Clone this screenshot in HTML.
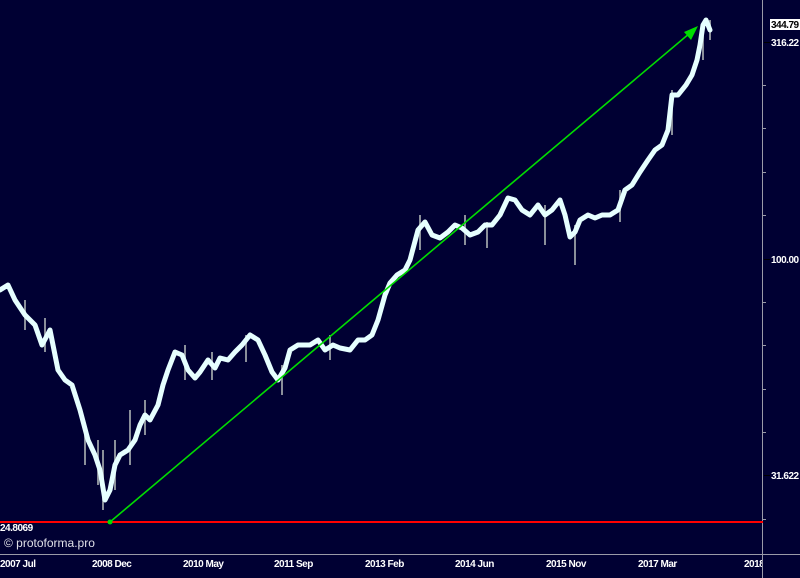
<!DOCTYPE html>
<html><head><meta charset="utf-8"><style>
html,body{margin:0;padding:0;background:#000033;}
body{width:800px;height:578px;overflow:hidden;position:relative;font-family:"Liberation Sans",sans-serif;}
svg{position:absolute;left:0;top:0;}
</style></head><body>
<svg width="800" height="578" viewBox="0 0 800 578">
<defs><clipPath id="c"><rect x="0" y="0" width="762" height="578"/></clipPath></defs>
<rect width="800" height="578" fill="#000033"/>
<line x1="762.5" y1="0" x2="762.5" y2="578" stroke="#9a9aa8" stroke-width="1"/>
<line x1="0" y1="554.5" x2="800" y2="554.5" stroke="#9a9aa8" stroke-width="1"/>
<g stroke="#9a9aa8" stroke-width="1">
<line x1="762" y1="85.5" x2="766" y2="85.5"/><line x1="762" y1="128.5" x2="766" y2="128.5"/><line x1="762" y1="172.5" x2="766" y2="172.5"/><line x1="762" y1="215.5" x2="766" y2="215.5"/>
<line x1="762" y1="302.5" x2="766" y2="302.5"/><line x1="762" y1="345.5" x2="766" y2="345.5"/><line x1="762" y1="389.5" x2="766" y2="389.5"/><line x1="762" y1="432.5" x2="766" y2="432.5"/><line x1="762" y1="519.5" x2="766" y2="519.5"/>
</g>
<g stroke="#000" stroke-width="1"><line x1="764" y1="42.5" x2="770" y2="42.5"/><line x1="764" y1="259.5" x2="770" y2="259.5"/><line x1="764" y1="475.5" x2="770" y2="475.5"/></g>
<g stroke="#8a8f9a" stroke-width="2">
<line x1="25" y1="300" x2="25" y2="330"/><line x1="45" y1="318" x2="45" y2="352"/><line x1="85" y1="430" x2="85" y2="465"/><line x1="98" y1="440" x2="98" y2="485"/><line x1="103" y1="450" x2="103" y2="510"/><line x1="115" y1="440" x2="115" y2="490"/><line x1="130" y1="410" x2="130" y2="465"/><line x1="145" y1="400" x2="145" y2="435"/><line x1="185" y1="345" x2="185" y2="380"/><line x1="212" y1="352" x2="212" y2="380"/><line x1="246" y1="335" x2="246" y2="362"/><line x1="282" y1="365" x2="282" y2="395"/><line x1="330" y1="335" x2="330" y2="360"/><line x1="420" y1="215" x2="420" y2="250"/><line x1="465" y1="215" x2="465" y2="245"/><line x1="487" y1="222" x2="487" y2="248"/><line x1="545" y1="205" x2="545" y2="245"/><line x1="575" y1="225" x2="575" y2="265"/><line x1="620" y1="190" x2="620" y2="222"/><line x1="672" y1="90" x2="672" y2="135"/><line x1="703" y1="22" x2="703" y2="60"/><line x1="710" y1="20" x2="710" y2="40"/>
</g>
<polyline fill="none" stroke="#e6ffff" stroke-width="5" stroke-linejoin="round" stroke-linecap="round" points="0,290 8,285 15,300 25,315 35,325 42,345 50,330 58,370 65,380 72,385 80,410 88,440 95,455 100,470 105,500 110,490 115,465 120,455 128,450 135,440 140,425 145,415 150,420 158,405 163,385 168,370 175,352 182,355 188,370 195,378 200,372 208,360 215,368 220,358 228,360 235,352 242,345 250,335 258,340 265,355 272,372 278,380 285,368 290,350 298,345 310,345 318,340 325,350 333,345 340,348 350,350 358,340 365,340 372,335 378,320 385,295 390,283 397,275 405,270 410,260 418,230 425,222 432,235 440,238 448,232 455,225 462,228 470,235 478,232 485,225 492,225 500,215 508,198 515,200 522,210 530,215 538,205 545,215 552,210 560,200 565,215 570,237 575,232 580,220 588,215 595,218 602,215 610,215 618,210 625,190 632,185 640,172 648,160 655,150 662,145 668,130 672,95 678,95 686,85 692,75 697,60 700,45 703,25 706,20 710,30"/>
<line x1="0" y1="522" x2="763" y2="522" stroke="#ff0000" stroke-width="2"/>
<line x1="110" y1="522" x2="690" y2="33" stroke="#00dd00" stroke-width="1.6"/>
<polygon points="698,26 684,32 691,40" fill="#00dd00"/>
<circle cx="110" cy="522" r="2.5" fill="#00dd00"/>
<g font-family="Liberation Sans, sans-serif" font-size="10" font-weight="bold" fill="#fff" style="letter-spacing:-0.5px">
<rect x="770" y="19" width="30" height="11" fill="#fff"/>
<text x="771" y="28" fill="#000">344.79</text>
<text x="771" y="46">316.22</text>
<text x="771" y="263">100.00</text>
<text x="771" y="479">31.622</text>
<text x="0" y="531">24.8069</text>
<g clip-path="url(#c)">
<text x="0" y="567">2007 Jul</text><text x="92" y="567">2008 Dec</text><text x="183" y="567">2010 May</text><text x="274" y="567">2011 Sep</text><text x="365" y="567">2013 Feb</text><text x="455" y="567">2014 Jun</text><text x="546" y="567">2015 Nov</text><text x="638" y="567">2017 Mar</text><text x="744" y="567">2018</text>
</g>
</g>
<text x="4" y="547" font-family="Liberation Sans, sans-serif" font-size="12" fill="#e0e0e8">© protoforma.pro</text>
</svg>
</body></html>
